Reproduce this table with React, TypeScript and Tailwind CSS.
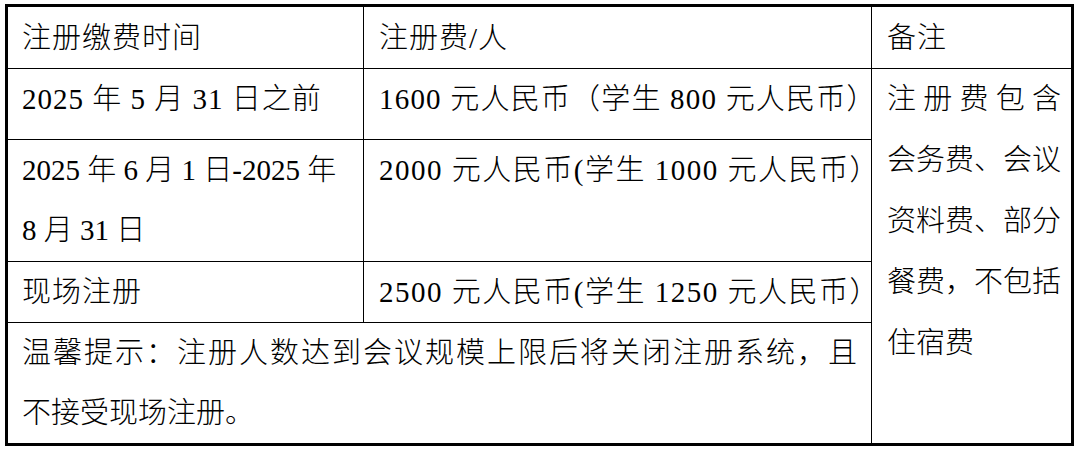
import React from "react";

const font = { fontFamily: "'Liberation Serif', 'Noto Sans CJK SC', serif" };

// spreads the characters of one line evenly across the cell width
const Spread = ({ text }: { text: string }) => (
  <div className="flex justify-between">
    {Array.from(text).map((c, i) => (
      <span key={i}>{c}</span>
    ))}
  </div>
);

export default function App() {
  return (
    <div className="bg-white w-[1080px] h-[453px] pt-[4px] pl-[5px]" style={font}>
      <div className="w-[1069px] border-[3px] border-black text-black text-[29px] leading-[60px] font-light tracking-[1px] grid grid-cols-[356px_508px_199px] grid-rows-[62px_71px_122px_61px_120px]">
        <div className="border-r border-b border-black pl-[14px] pt-[1px]">注册缴费时间</div>
        <div className="border-r border-b border-black pl-[15px] pt-[1px]">注册费/人</div>
        <div className="border-b border-black pl-[15px] pt-[1px]">备注</div>

        <div className="border-r border-b border-black pl-[14px]">2025 年 5 月 31 日之前</div>
        <div className="border-r border-b border-black pl-[15px] tracking-[1.2px] whitespace-nowrap">
          1600 元人民币（学生 800 元人民币）
        </div>
        <div className="col-start-3 row-start-2 row-span-4 pl-[15px] pr-[10px] leading-[61px] tracking-normal">
          <Spread text="注册费包含" />
          <Spread text="会务费、会议" />
          <Spread text="资料费、部分" />
          <Spread text="餐费，不包括" />
          <div>住宿费</div>
        </div>

        <div className="col-start-1 row-start-3 border-r border-b border-black pl-[14px] tracking-normal whitespace-nowrap">
          <div>2025 年 6 月 1 日-2025 年</div>
          <div>8 月 31 日</div>
        </div>
        <div className="col-start-2 row-start-3 border-r border-b border-black pl-[15px] tracking-[1.5px] whitespace-nowrap">
          2000 元人民币(学生 1000 元人民币）
        </div>

        <div className="col-start-1 row-start-4 border-r border-b border-black pl-[14px]">现场注册</div>
        <div className="col-start-2 row-start-4 border-r border-b border-black pl-[15px] tracking-[1.5px] whitespace-nowrap">
          2500 元人民币(学生 1250 元人民币）
        </div>

        <div className="col-start-1 col-span-2 row-start-5 border-r border-black pl-[14px] pr-[14px] tracking-normal">
          <div className="[text-align-last:justify]">温馨提示：注册人数达到会议规模上限后将关闭注册系统，且</div>
          <div>不接受现场注册。</div>
        </div>
      </div>
    </div>
  );
}
